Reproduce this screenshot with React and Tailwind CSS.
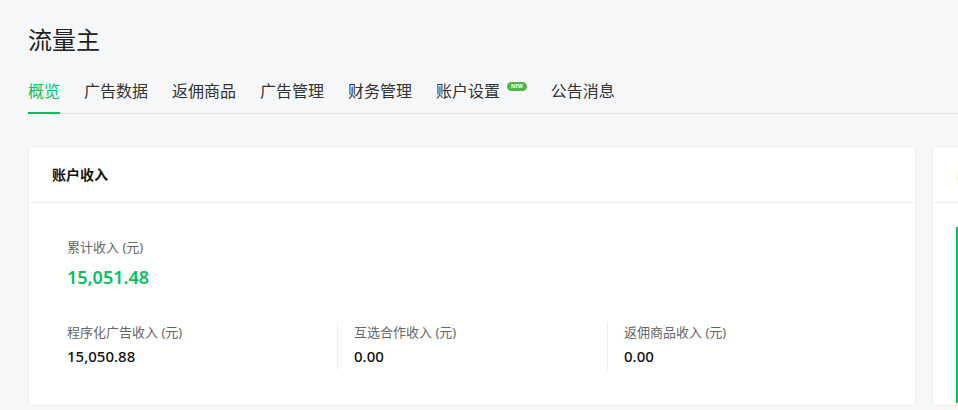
import React from 'react';

const tabs = ['概览', '广告数据', '返佣商品', '广告管理', '财务管理', '账户设置', '公告消息'];

const stats = [
  { label: '程序化广告收入 (元)', value: '15,050.88' },
  { label: '互选合作收入 (元)', value: '0.00' },
  { label: '返佣商品收入 (元)', value: '0.00' },
];

const App = () => {
  return (
    <div
      className="w-[958px] h-[410px] overflow-hidden bg-[#f6f7f9] text-[#333]"
      style={{ fontFamily: '"Noto Sans", "Noto Sans CJK SC", sans-serif' }}
    >
      <div className="pl-7">
        {/* Title */}
        <h1 className="pt-[22px] text-[24px] leading-[36px] text-[#222]">流量主</h1>

        {/* Tabs */}
        <nav className="mt-[21px] flex border-b border-[#e3e4e6]">
          {tabs.map((t, i) => (
            <div key={t} className={`relative flex items-start ${i === 0 ? '' : 'ml-6'}`}>
              <span
                className={`pb-[9px] text-[16px] leading-[24px] ${
                  i === 0 ? 'text-[#07c160] border-b-2 border-[#07c160] -mb-px' : 'text-[#333]'
                }`}
              >
                {t}
              </span>
              {t === '账户设置' && (
                <span className="ml-[7px] mt-[3px] h-[9px] px-[4px] rounded-full bg-[#4cb848] text-[5px] leading-[9px] font-bold text-white">
                  NEW
                </span>
              )}
            </div>
          ))}
        </nav>

        {/* Cards */}
        <div className="mt-8 flex gap-4">
          <section className="w-[888px] shrink-0 h-[260px] rounded-md bg-white border border-[#ebedf0]">
            <div className="h-[56px] px-[23px] flex items-center border-b border-[#ebedf0]">
              <h2 className="text-[14px] font-bold text-[#111]">账户收入</h2>
            </div>
            <div className="px-[38px] pt-[35px]">
              <div className="text-[13px] leading-[18px] text-[#666]">累计收入 (元)</div>
              <div className="mt-[8px] text-[18px] leading-[26px] font-semibold text-[#07c160]">15,051.48</div>
              <div className="mt-[32px] grid grid-cols-3">
                {stats.map((s, i) => (
                  <div
                    key={s.label}
                    className={`h-[48px] ${i === 0 ? '' : 'pl-4 border-l border-[#ebedf0]'}`}
                  >
                    <div className="pt-[1px] text-[13px] leading-[18px] text-[#666]">{s.label}</div>
                    <div className="mt-[5px] text-[15px] leading-[20px] font-medium text-[#111]">{s.value}</div>
                  </div>
                ))}
              </div>
            </div>
          </section>

          <section className="w-[300px] shrink-0 h-[260px] rounded-md bg-white border border-[#ebedf0]">
            <div className="h-[56px] px-[24px] flex items-center border-b border-[#ebedf0]">
              <h2 className="text-[14px] font-bold text-[#c27a10]">收入趋势</h2>
            </div>
            <div className="px-[23px] pt-6">
              <div className="h-[176px] border-l-2 border-[#07c160]" />
            </div>
          </section>
        </div>
      </div>
    </div>
  );
};

export default App;
